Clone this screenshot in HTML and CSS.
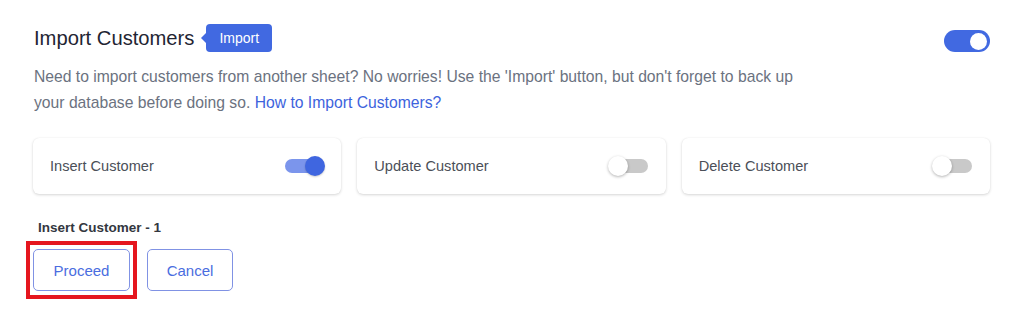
FILE: index.html
```html
<!DOCTYPE html>
<html lang="en">
<head>
<meta charset="utf-8">
<title>Import Customers</title>
<link rel="stylesheet" href="styles.css">
</head>
<body>
<div class="page">
  <div class="header">
    <div class="title-group">
      <h1 class="title">Import Customers</h1>
      <span class="badge">Import</span>
    </div>
    <span class="switch switch-main"><span class="switch-knob"></span></span>
  </div>
  <p class="desc">Need to import customers from another sheet? No worries! Use the 'Import' button, but don't forget to back up your database before doing so. <a class="link" href="#">How to Import Customers?</a></p>
  <div class="cards">
    <div class="card">
      <span class="card-label">Insert Customer</span>
      <span class="toggle on"><span class="toggle-track"></span><span class="toggle-knob"></span></span>
    </div>
    <div class="card">
      <span class="card-label">Update Customer</span>
      <span class="toggle"><span class="toggle-track"></span><span class="toggle-knob"></span></span>
    </div>
    <div class="card">
      <span class="card-label">Delete Customer</span>
      <span class="toggle"><span class="toggle-track"></span><span class="toggle-knob"></span></span>
    </div>
  </div>
  <div class="summary">Insert Customer - 1</div>
  <div class="actions">
    <button class="btn btn-proceed btn-highlight">Proceed</button>
    <button class="btn btn-cancel">Cancel</button>
  </div>
</div>
</body>
</html>
```

FILE: styles.css
```css
* { box-sizing: border-box; }
html, body { margin: 0; padding: 0; background: #ffffff; }
body { font-family: "Liberation Sans", Arial, sans-serif; }

.page {
  width: 1024px;
  padding: 24px 34px 0 33px;
}

.header {
  display: flex;
  justify-content: space-between;
  align-items: center;
  height: 28px;
}

.title-group {
  display: flex;
  align-items: center;
  padding-left: 1px;
}

.title {
  margin: 0;
  font-size: 20.2px;
  font-weight: 400;
  color: #1f2533;
  line-height: 28px;
}

.badge {
  position: relative;
  margin-left: 12px;
  height: 28px;
  line-height: 28px;
  padding: 0 13px;
  background: #4169e1;
  color: #ffffff;
  font-size: 14px;
  border-radius: 4px;
}
.badge::before {
  content: "";
  position: absolute;
  left: -5px;
  top: 9px;
  border-top: 5px solid transparent;
  border-bottom: 5px solid transparent;
  border-right: 5px solid #4169e1;
}

.switch-main {
  margin-top: 6px;
  width: 46px;
  height: 22px;
  border-radius: 11px;
  background: #4169e1;
  display: flex;
  justify-content: flex-end;
  align-items: center;
  padding: 0 3px;
}
.switch-knob {
  width: 17px;
  height: 17px;
  border-radius: 50%;
  background: #ffffff;
}

.desc {
  margin: 12px 0 0 1px;
  width: 785px;
  font-size: 15.7px;
  line-height: 26px;
  color: #6b7280;
}
.link { color: #3d63dd; text-decoration: none; }

.cards {
  margin-top: 22px;
  display: grid;
  grid-template-columns: 1fr 1fr 1fr;
  gap: 16px;
}
.card {
  height: 56px;
  background: #ffffff;
  border-radius: 6px;
  box-shadow: 0 1px 3px rgba(0, 0, 0, 0.16), 0 0 1px rgba(0, 0, 0, 0.08);
  display: flex;
  align-items: center;
  justify-content: space-between;
  padding: 0 16px 0 17px;
}
.card-label {
  font-size: 14.6px;
  color: #4b4f58;
}

.toggle {
  position: relative;
  width: 42px;
  height: 20px;
  display: flex;
  align-items: center;
}
.toggle-track {
  margin-left: 2px;
  width: 38px;
  height: 14px;
  border-radius: 7px;
  background: #c9c9c9;
}
.toggle-knob {
  position: absolute;
  left: 0;
  top: 0;
  width: 20px;
  height: 20px;
  border-radius: 50%;
  background: #ffffff;
  box-shadow: 0 1px 3px rgba(0, 0, 0, 0.3);
}
.toggle.on .toggle-track { background: #7b95ec; }
.toggle.on .toggle-knob {
  left: 22px;
  background: #3f66e0;
  box-shadow: 0 1px 2px rgba(0, 0, 0, 0.2);
}

.summary {
  margin-top: 24px;
  padding-left: 5px;
  font-size: 13.5px;
  font-weight: 700;
  line-height: 20px;
  color: #333740;
}

.actions {
  margin-top: 11px;
  display: flex;
  gap: 17px;
  padding-bottom: 20px;
}
.btn {
  height: 42px;
  padding: 0;
  font-family: "Liberation Sans", Arial, sans-serif;
  font-size: 15px;
  color: #4a6de0;
  background: #ffffff;
  border: 1px solid #8092e4;
  border-radius: 5px;
}
.btn-proceed { width: 97px; }
.btn-cancel { width: 86px; }
.btn-highlight { position: relative; }
.btn-highlight::after {
  content: "";
  position: absolute;
  left: -8px;
  right: -8px;
  top: -9px;
  bottom: -9px;
  border: 4px solid #e5161e;
  pointer-events: none;
}
```
